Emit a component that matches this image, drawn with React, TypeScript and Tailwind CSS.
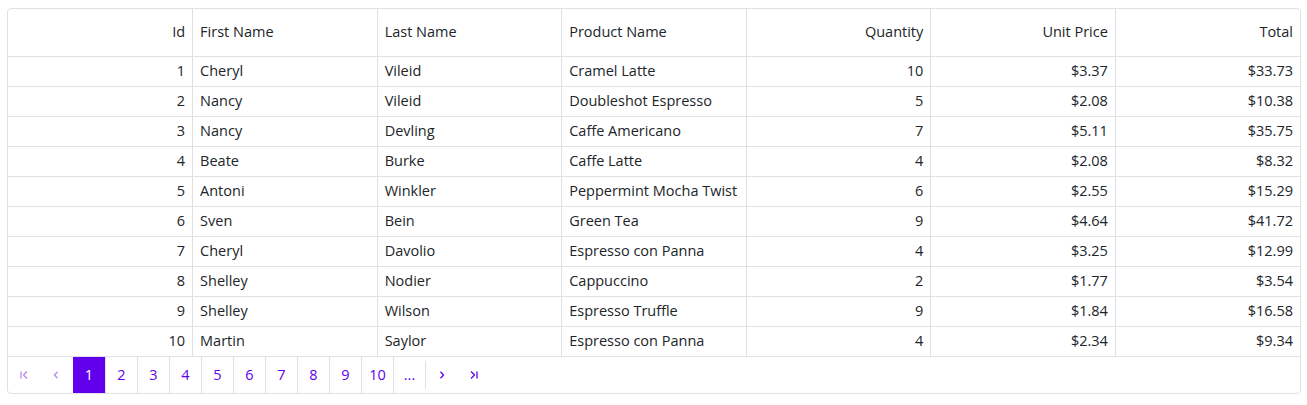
const columns = [
  { key: 'id', label: 'Id', right: true },
  { key: 'first', label: 'First Name', right: false },
  { key: 'last', label: 'Last Name', right: false },
  { key: 'product', label: 'Product Name', right: false },
  { key: 'qty', label: 'Quantity', right: true },
  { key: 'price', label: 'Unit Price', right: true },
  { key: 'total', label: 'Total', right: true },
];

const rows = [
  [1, 'Cheryl', 'Vileid', 'Cramel Latte', 10, '$3.37', '$33.73'],
  [2, 'Nancy', 'Vileid', 'Doubleshot Espresso', 5, '$2.08', '$10.38'],
  [3, 'Nancy', 'Devling', 'Caffe Americano', 7, '$5.11', '$35.75'],
  [4, 'Beate', 'Burke', 'Caffe Latte', 4, '$2.08', '$8.32'],
  [5, 'Antoni', 'Winkler', 'Peppermint Mocha Twist', 6, '$2.55', '$15.29'],
  [6, 'Sven', 'Bein', 'Green Tea', 9, '$4.64', '$41.72'],
  [7, 'Cheryl', 'Davolio', 'Espresso con Panna', 4, '$3.25', '$12.99'],
  [8, 'Shelley', 'Nodier', 'Cappuccino', 2, '$1.77', '$3.54'],
  [9, 'Shelley', 'Wilson', 'Espresso Truffle', 9, '$1.84', '$16.58'],
  [10, 'Martin', 'Saylor', 'Espresso con Panna', 4, '$2.34', '$9.34'],
];

function FirstIcon() {
  return (
    <svg width="10" height="10" viewBox="0 0 10 10" fill="none" stroke="currentColor" strokeWidth="1.3">
      <path d="M2 1.5v7" />
      <path d="M8 1.5L4.5 5L8 8.5" />
    </svg>
  );
}

function PrevIcon() {
  return (
    <svg width="10" height="10" viewBox="0 0 10 10" fill="none" stroke="currentColor" strokeWidth="1.3">
      <path d="M6.5 1.8L3.5 5l3 3.2" />
    </svg>
  );
}

function NextIcon() {
  return (
    <svg width="10" height="10" viewBox="0 0 10 10" fill="none" stroke="currentColor" strokeWidth="1.3">
      <path d="M3.5 1.8L6.5 5l-3 3.2" />
    </svg>
  );
}

function LastIcon() {
  return (
    <svg width="10" height="10" viewBox="0 0 10 10" fill="none" stroke="currentColor" strokeWidth="1.3">
      <path d="M8 1.5v7" />
      <path d="M2 1.5L5.5 5L2 8.5" />
    </svg>
  );
}

export default function App() {
  return (
    <div className="bg-white pt-2 pl-[7px]" style={{ fontFamily: '"Open Sans", "Noto Sans", sans-serif' }}>
      <div className="w-[1294px] border border-[#dee2e6] rounded overflow-hidden text-[14.5px] text-[#212529]">
        <table className="w-full table-fixed border-collapse">
          <thead>
            <tr className="h-[47px] border-b border-[#dee2e6]">
              {columns.map((c, i) => (
                <th
                  key={c.key}
                  className={`font-normal px-[7px] whitespace-nowrap ${c.right ? 'text-right' : 'text-left'} ${
                    i < columns.length - 1 ? 'border-r border-[#dee2e6]' : ''
                  }`}
                >
                  {c.label}
                </th>
              ))}
            </tr>
          </thead>
          <tbody>
            {rows.map((r, ri) => (
              <tr key={ri} className="h-[30px] border-b border-[#dee2e6]">
                {r.map((v, i) => (
                  <td
                    key={i}
                    className={`px-[7px] leading-none whitespace-nowrap ${columns[i].right ? 'text-right' : 'text-left'} ${
                      i < r.length - 1 ? 'border-r border-[#dee2e6]' : ''
                    }`}
                  >
                    {v}
                  </td>
                ))}
              </tr>
            ))}
          </tbody>
        </table>
        <div className="flex h-9 text-[#6200ee]">
          <button className="w-8 flex items-center justify-center text-[#b58af5]">
            <FirstIcon />
          </button>
          <button className="w-8 flex items-center justify-center text-[#b58af5]">
            <PrevIcon />
          </button>
          <button className="w-8 ml-px flex items-center justify-center bg-[#6200ee] text-white">1</button>
          {[2, 3, 4, 5, 6, 7, 8, 9, 10].map((n) => (
            <button key={n} className="w-8 flex items-center justify-center border-l border-[#dee2e6]">
              {n}
            </button>
          ))}
          <button className="w-8 flex items-center justify-center border-l border-[#dee2e6]">...</button>
          <div className="flex items-center">
            <div className="w-px h-7 bg-[#dee2e6]" />
          </div>
          <button className="w-8 flex items-center justify-center">
            <NextIcon />
          </button>
          <button className="w-8 flex items-center justify-center">
            <LastIcon />
          </button>
        </div>
      </div>
    </div>
  );
}
